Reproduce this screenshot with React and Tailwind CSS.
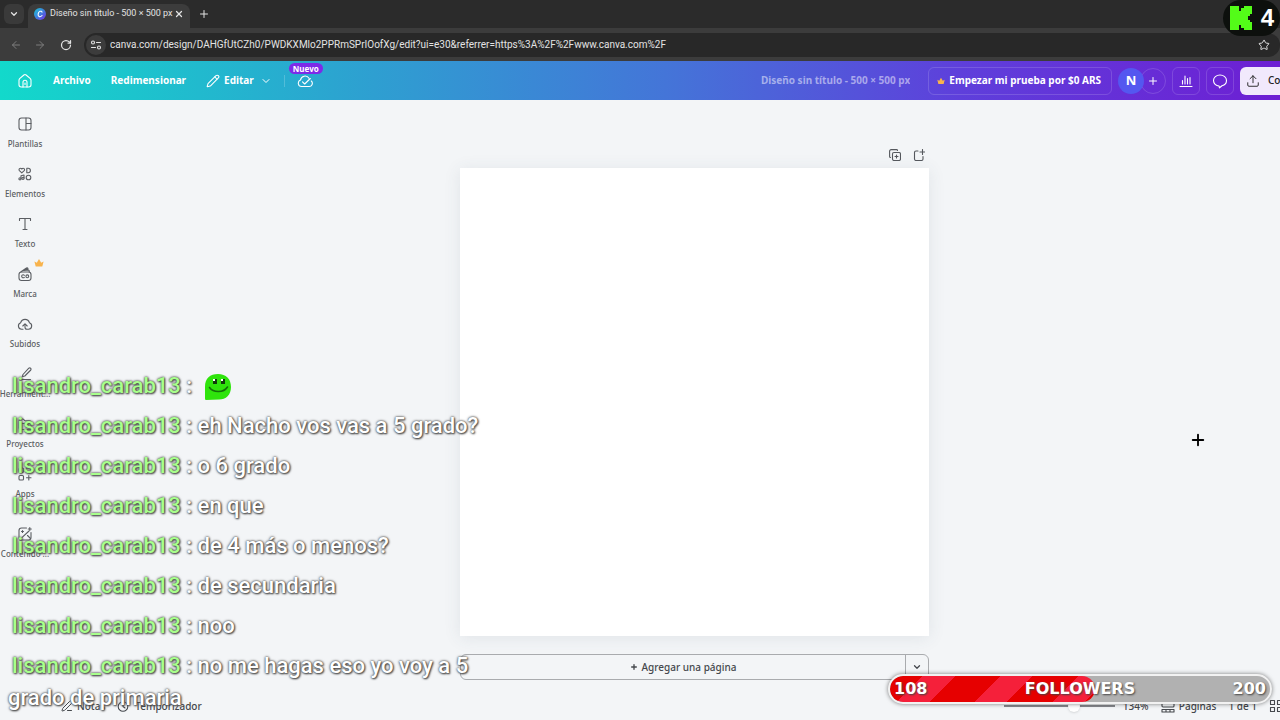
import { useState } from 'react'
import { ChevronDown, X, Plus, ArrowLeft, ArrowRight, RotateCw, Star, Pencil, Upload, PenLine } from 'lucide-react'

const Svg = ({ className = 'size-4', box = 16, children }) => (
  <svg viewBox={`0 0 ${box} ${box}`} className={className} fill="none" stroke="currentColor" strokeWidth="1.1" strokeLinecap="round" strokeLinejoin="round" aria-hidden="true">
    {children}
  </svg>
)

const Crown = ({ className }) => (
  <svg viewBox="0 0 10 10" className={className} aria-hidden="true">
    <path fill="#f8b34c" d="M.4 3.4 2.8 4.8 5 1l2.2 3.8 2.4-1.4-1.3 5.2H1.7z" />
  </svg>
)

const HomeIcon = () => (
  <Svg className="size-4">
    <path d="M2 7.2c0-.8.3-1.4.9-1.9l4-3.3c.6-.5 1.6-.5 2.2 0l4 3.3c.6.5.9 1.1.9 1.9v4.6A2.2 2.2 0 0 1 11.800 14H4.200A2.200 2.200 0 0 1 2 11.800z" />
    <path d="M6 14V9.200a2 2 0 0 1 4 0V14M8 10v1.500" />
  </Svg>
)

const CloudCheck = () => (
  <Svg className="size-4">
    <path d="M4.500 13.500a3.300 3.300 0 0 1-1-6.400 4.600 4.600 0 0 1 8.500-1.800M14.300 8a3.200 3.200 0 0 1-2.600 5.500H4.500" />
    <path d="m5.500 8.800 2.200 2.200 5.600-5.500" />
  </Svg>
)

const menu = [
  { label: 'Plantillas', icon: <><rect x="2" y="2" width="12" height="12" rx="2.5" /><path d="M9 2v12M9 7.500h5" /></> },
  { label: 'Elementos', icon: <><path d="M4.800 6.800 2.400 4.600C1.200 3.200 3.200 1.300 4.800 3c1.600-1.700 3.600.2 2.400 1.600zM9.800 2.300h1.400a2.200 2.200 0 0 1 0 4.400H9.800zM4 12.700V9.700l3-.7v3" /><circle cx="3" cy="12.800" r="1.100" /><circle cx="6" cy="12.300" r="1.100" /><circle cx="11.500" cy="11.500" r="2.300" /></> },
  { label: 'Texto', icon: <path d="M2.500 4.500V2.500h11v2M8 2.500v11M6 13.500h4" /> },
  { label: 'Marca', pro: true, icon: <><rect x="2" y="6" width="12" height="8.500" rx="2.500" /><path d="M4 5.800 9.500 2c.8-.5 1.500 0 1.500.6L7 4.500l4-.6c1 0 1.500.8 1.200 1.900M7.300 9.300a1.500 1.500 0 1 0 0 2" /><circle cx="10.300" cy="10.300" r="1.400" /></> },
  { label: 'Subidos', icon: <><path d="M6 13.300H4.600a3.400 3.400 0 0 1-.9-6.600 4.500 4.500 0 0 1 8.700 0 3.400 3.400 0 0 1-.9 6.600H10c-1.300 0-2-.8-2-2V8.300" /><path d="m5.800 10 2.200-2.200 2.200 2.200" /></> },
  { label: 'Herramient...', icon: <path d="m6 8.500 5.800-6.300c1.200-1 3 .5 2 1.800L7.800 10l-2.600.7zM2.500 13.500h11" /> },
  { label: 'Proyectos', icon: <path d="M2 12V4.500C2 3.500 2.600 3 3.500 3h2.300c1.200 0 1.200 1.800 2.400 1.800h4.300c1 0 1.500.6 1.500 1.500V12c0 1-.6 1.500-1.500 1.500h-9C2.600 13.500 2 13 2 12zM2 7.500h12" /> },
  { label: 'Apps', icon: <><rect x="2" y="2" width="4.500" height="4.500" rx="1" /><rect x="9.500" y="2" width="4.500" height="4.500" rx="1" /><rect x="2" y="9.500" width="4.500" height="4.500" rx="1" /><path d="M11.800 9.500V14M9.500 11.800H14" /></> },
  { label: 'Contenido ...', last: true, icon: <><path d="M9.500 2h-5A2.500 2.500 0 0 0 2 4.500v7A2.500 2.500 0 0 0 4.500 14h7a2.500 2.500 0 0 0 2.500-2.500v-5M3 13.300 12 5" /><path d="M12.800 1.500v3M11.300 3h3M5.500 4.500v2M4.500 5.500h2M10.500 9.500l3 3" /></> },
]

const messages = [
  '',
  'eh Nacho vos vas a 5 grado?',
  'o 6 grado',
  'en que',
  'de 4 más o menos?',
  'de secundaria',
  'noo',
  'no me hagas eso yo voy a 5 grado de primaria',
]

const Browser = () => {
  const [url, setUrl] = useState('canva.com/design/DAHGfUtCZh0/PWDKXMlo2PPRmSPrIOofXg/edit?ui=e30&referrer=https%3A%2F%2Fwww.canva.com%2F')
  return (
    <div className="shrink-0 bg-[#2b2b2b] font-['Roboto',sans-serif] text-[10px] text-[#e3e3e3]">
      <div className="flex h-7 items-end pl-1">
        <button aria-label="Buscar pestañas" className="mb-1 flex size-5 items-center justify-center rounded-md bg-[#3a3a3a]">
          <ChevronDown className="size-2.5" strokeWidth={3} />
        </button>
        <div className="ml-1 flex h-6 w-[162px] items-center rounded-t-lg bg-[#3c3c3c] pr-1.5 pb-1 pl-1.5">
          <svg viewBox="0 0 12 12" className="size-3 shrink-0" aria-hidden="true">
            <defs>
              <linearGradient id="logo" x1="0" y1="0" x2="1" y2="1">
                <stop offset="0" stopColor="#19c8d2" />
                <stop offset=".5" stopColor="#3f7fe0" />
                <stop offset="1" stopColor="#7a2be0" />
              </linearGradient>
            </defs>
            <circle cx="6" cy="6" r="6" fill="url(#logo)" />
            <path d="M8 4.200C7.700 2.500 4.500 2.900 4.100 6.100c-.3 3 2.400 3.300 3.900 1.400" fill="none" stroke="#fff" strokeWidth="1.100" strokeLinecap="round" />
          </svg>
          <span className="ml-1 flex-1 text-[9px] whitespace-nowrap">Diseño sin título - 500 × 500 px</span>
          <button aria-label="Cerrar pestaña"><X className="size-2.5" strokeWidth={3} /></button>
        </div>
        <button aria-label="Nueva pestaña" className="mb-2 ml-2"><Plus className="size-3" strokeWidth={2} /></button>
      </div>
      <div className="flex h-[33px] items-center bg-[#3c3c3c] pl-2.5">
        <button aria-label="Atrás" className="text-[#7d7d7d]"><ArrowLeft className="size-3" /></button>
        <button aria-label="Adelante" className="ml-3 text-[#7d7d7d]"><ArrowRight className="size-3" /></button>
        <button aria-label="Recargar" className="ml-3.5"><RotateCw className="size-3" strokeWidth={2.5} /></button>
        <div className="ml-3 flex h-6 flex-1 items-center rounded-full bg-[#282828] pr-2.5 pl-0.5">
          <button aria-label="Información del sitio" className="flex size-5 items-center justify-center rounded-full bg-[#3c3c3c]">
            <Svg className="size-3" box={12}>
              <circle cx="3" cy="3.500" r="1.500" /><path d="M6.500 3.500h4M1.500 8.500h4" /><circle cx="9" cy="8.500" r="1.500" />
            </Svg>
          </button>
          <input aria-label="Dirección" value={url} onChange={e => setUrl(e.target.value)} className="ml-1 min-w-0 flex-1 bg-transparent outline-none" />
          <button aria-label="Favorito"><Star className="size-3" /></button>
        </div>
      </div>
    </div>
  )
}

const Header = () => {
  const [title, setTitle] = useState('Diseño sin título - 500 × 500 px')
  return (
    <header className="flex h-[39px] shrink-0 items-center overflow-hidden bg-[linear-gradient(90deg,#12d9cb,#2ba5d0_26%,#4475d8_52%,#5e3fdb_75%,#6d1fd3)] pl-[17px] text-[10px] font-bold text-white">
      <button aria-label="Inicio"><HomeIcon /></button>
      <button className="ml-5">Archivo</button>
      <button className="ml-5">Redimensionar</button>
      <button className="ml-5 flex items-center">
        <Pencil className="size-3.5" strokeWidth={1.8} />
        <span className="ml-1">Editar</span>
        <ChevronDown className="ml-1.5 size-3" />
      </button>
      <span className="ml-3 h-3 w-px bg-white/20"></span>
      <button aria-label="Guardado" className="relative ml-3">
        <CloudCheck />
        <span className="absolute -top-2.5 -left-2 rounded-full bg-[#7d2ae8] px-1 text-[8px] leading-[11px]">Nuevo</span>
      </button>
      <div className="ml-auto flex shrink-0 items-center">
        <input aria-label="Título del diseño" value={title} onChange={e => setTitle(e.target.value)} className="w-44 bg-transparent text-right text-white/50 outline-none" />
        <button className="ml-[18px] flex h-7 items-center rounded-md border border-white/15 pr-2.5 pl-2">
          <Crown className="mr-1 size-2" />
          Empezar mi prueba por $0 ARS
        </button>
        <span className="z-10 ml-1.5 flex size-[26px] items-center justify-center rounded-full bg-[#5457f0] text-[13px]">N</span>
        <button aria-label="Agregar persona" className="-ml-1 flex size-[26px] items-center justify-center rounded-full border border-white/15"><Plus className="size-3" /></button>
        <button aria-label="Estadísticas" className="ml-1.5 flex size-7 items-center justify-center rounded-md border border-white/15">
          <Svg className="size-4"><path d="M2 13.500h12M4.500 11V7.500M7 11V3M9.500 11V5.500M12 11V4.500" /></Svg>
        </button>
        <button aria-label="Comentarios" className="ml-1.5 flex size-7 items-center justify-center rounded-md border border-white/15">
          <Svg className="size-4"><path d="M7 13C4 12.800 1.500 10.500 1.500 7.500 1.500 4.300 4.300 2 8 2s6.500 2.300 6.500 5.500c0 2.500-2 4.600-4.500 5.300L7.500 14.800z" /></Svg>
        </button>
        <button className="ml-1.5 flex h-7 w-10 items-center overflow-hidden rounded-l-md bg-[#f1e9fc] pl-1.5 font-medium whitespace-nowrap text-[#222]">
          <Upload className="mr-2 size-3.5 shrink-0" strokeWidth={1.600} />
          Compartir
        </button>
      </div>
    </header>
  )
}

const Sidebar = () => (
  <nav className="flex w-[50px] shrink-0 flex-col gap-4 pt-4 text-[#5a5d62]">
    {menu.map(item => (
      <button key={item.label} className={`relative flex flex-col items-center gap-1.5 text-[8px] leading-[12px] font-medium whitespace-nowrap ${item.last ? 'mt-2.5' : ''}`}>
        <Svg>{item.icon}</Svg>
        {item.label}
        {item.pro && <Crown className="absolute -top-2 right-1.5 size-2.5" />}
      </button>
    ))}
  </nav>
)

const Footer = () => {
  const [zoom, setZoom] = useState(134)
  return (
    <footer className="flex h-7 shrink-0 items-center pl-[61px] text-[10px] font-medium">
      <button className="flex items-center gap-1"><PenLine className="size-3" />Notas</button>
      <button className="ml-3 flex items-center gap-1.5">
        <Svg className="size-3" box={12}><circle cx="6" cy="6.500" r="4.800" /><path d="M6 3.500v3l2 1.500M5 .6h2" /></Svg>
        Temporizador
      </button>
      <input
        type="range"
        aria-label="Zoom"
        min="10"
        max="200"
        value={zoom}
        onChange={e => setZoom(Number(e.target.value))}
        className="ml-auto h-3 w-[111px] appearance-none bg-[linear-gradient(#85878c,#85878c)] bg-[length:100%_2px] bg-center bg-no-repeat [&::-webkit-slider-thumb]:size-3 [&::-webkit-slider-thumb]:appearance-none [&::-webkit-slider-thumb]:rounded-full [&::-webkit-slider-thumb]:bg-white [&::-webkit-slider-thumb]:shadow"
      />
      <span className="ml-2 w-[26px]">{zoom}%</span>
      <button className="ml-3 flex items-center gap-1">
        <Svg className="size-3.5" box={14}><rect x="1" y="1" width="12" height="7" rx="1" /><path d="M1 10.500h12v2.500H1zM5 10.500V13M9 10.500V13" /></Svg>
        Páginas
      </button>
      <span className="ml-3">1 de 1</span>
      <button aria-label="Vista de cuadrícula" className="-mr-[3px] ml-3">
        <Svg className="size-3.5" box={14}><path d="M1.500 1.500h4v4h-4zM8.500 1.500h4v4h-4zM1.500 8.500h4v4h-4zM8.500 8.500h4v4h-4z" /></Svg>
      </button>
    </footer>
  )
}

const Editor = () => (
  <main className="flex min-w-0 flex-1 flex-col items-center pt-[49px] pl-[59px]">
    <div className="flex w-2/5 flex-col">
      <div className="flex h-3 items-center justify-end gap-3 pr-1 text-[#55585d]">
        <button aria-label="Duplicar página">
          <Svg className="size-3" box={12}><rect x="3.500" y="3.500" width="8" height="8" rx="1.500" /><path d="M7.500 6v3M6 7.500h3M1.500 8.500C.9 8.500.6 8 .6 7.500V2.200C.6 1.200 1.200.6 2.200.6h5.300c.6 0 1 .4 1 .9" /></Svg>
        </button>
        <button aria-label="Agregar página">
          <Svg className="size-3" box={12}><path d="M5 2H3c-1 0-1.500.5-1.500 1.500V10c0 1 .5 1.500 1.500 1.500h5.500c1 0 1.500-.5 1.500-1.500V7.500M9.500.5v5M7 3h5" /></Svg>
        </button>
      </div>
      <div className="mt-[7px] aspect-square bg-white shadow-[0_2px_16px_rgba(57,76,96,0.1)]"></div>
      <div className="mt-[18px] flex h-[26px] rounded-md border border-[#a9abae] text-[10px] font-medium">
        <button className="flex flex-1 items-center justify-center gap-1"><Plus className="size-2" strokeWidth={4} />Agregar una página</button>
        <button aria-label="Más opciones" className="flex w-[23px] items-center justify-center border-l border-[#a9abae]"><ChevronDown className="size-2.5" strokeWidth={3} /></button>
      </div>
    </div>
  </main>
)

const Chat = () => (
  <div className="pointer-events-none absolute bottom-1.5 left-2 flex w-[478px] flex-col gap-2 font-['Roboto',sans-serif] text-[22px] leading-8 font-medium text-white [text-shadow:1px_1px_2px_#444,0_0_2px_#555,0_0_3px_#777]">
    {messages.map((text, i) => (
      <p key={i}>
        <span className="pl-1 text-[#a8ff8c]">lisandro_carab13</span> :{' '}
        {text || (
          <svg viewBox="0 0 28 28" className="ml-1.5 inline size-7" aria-label="Emote">
            <path fill="#2fe40c" d="M1 14C1 5 6 1 14 1s13 5 13 13-5 12.500-12 12.500L2 27c-1 0-1-1-1-2z" />
            <path fill="#123d0b" d="M9 6h4v5H9zM17 6h4v5h-4z" />
            <path fill="#fff" d="M9 6h2v2H9zM17 6h2v2h-2z" />
            <path fill="none" stroke="#146f09" strokeWidth="1.600" strokeLinecap="round" d="M5.500 14.500c4 5.500 14 5.500 18-.5" />
          </svg>
        )}
      </p>
    ))}
  </div>
)

const Followers = () => {
  const count = 108
  const goal = 200
  return (
    <div className="absolute right-2 bottom-4 h-[30px] w-[384px] overflow-hidden rounded-full border-2 border-[#f2f2f2] bg-[#b1b1b1] font-['DejaVu_Sans',sans-serif] text-[16px] font-bold text-white shadow-[0_0_4px_rgba(0,0,0,0.5)] [text-shadow:1px_1px_2px_#444]">
      <div className="absolute inset-y-0 left-0 rounded-full bg-[repeating-linear-gradient(135deg,#e60000_0_23px,#f5203a_23px_46px,#e60000_46px_55px)]" style={{ width: `${(count / goal) * 100}%` }}></div>
      <div className="relative flex h-full items-center justify-between px-1">
        <span>{count}</span>
        <span>FOLLOWERS</span>
        <span>{goal}</span>
      </div>
    </div>
  )
}

const App = () => (
  <div className="relative flex h-screen flex-col overflow-hidden bg-[#f3f5f7] font-['Noto_Sans',sans-serif] text-[#45484d]">
    <Browser />
    <Header />
    <div className="flex min-h-0 flex-1">
      <Sidebar />
      <Editor />
    </div>
    <Footer />
    <Chat />
    <Followers />
    <div className="absolute top-0 right-0 flex h-9 items-center gap-2 rounded-full bg-[#0d100d] pr-1.5 pl-1.5 font-['Liberation_Sans',sans-serif] text-[24px] font-bold text-white">
      <svg viewBox="0 0 24 26" className="h-[26px] w-6" aria-label="Kick">
        <path fill="#53fc18" d="M1 1h9v5h2V3h3V1h8v8h-2v2h-2v4h2v2h2v8h-8v-2h-3v-3h-2v5H1z" />
      </svg>
      4
    </div>
    <Plus className="absolute top-[431px] right-[73px] size-[18px] text-black" strokeWidth={2.500} />
  </div>
)

export default App
